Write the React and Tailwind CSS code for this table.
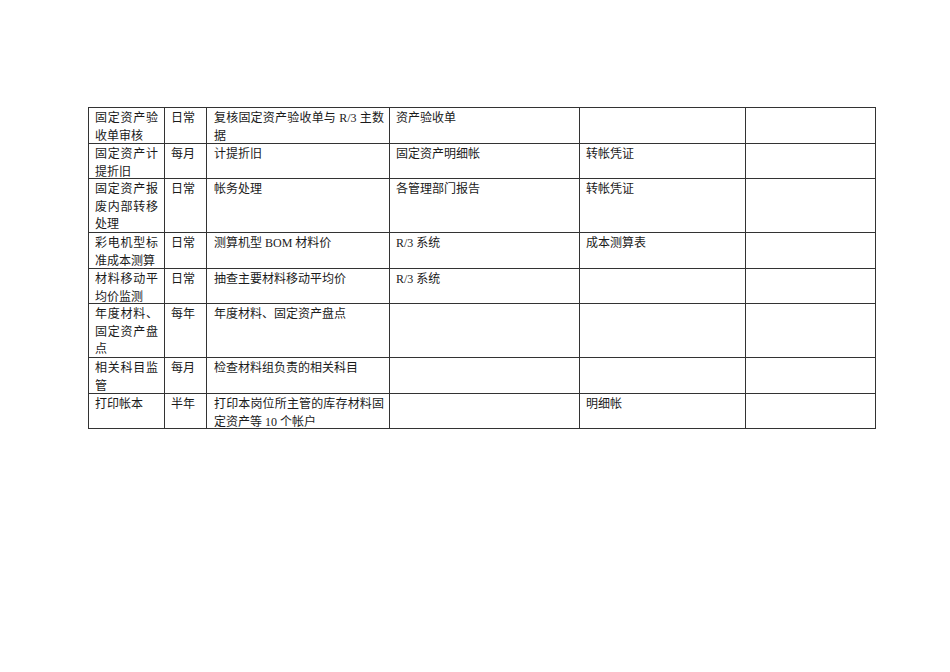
import React from "react";

// Row heights taken from the reference ruling
const rows = [
  { h: "h-[36px]", cells: ["固定资产验收单审核", "日常", "复核固定资产验收单与 R/3 主数据", "资产验收单", "", ""] },
  { h: "h-[35px]", cells: ["固定资产计提折旧", "每月", "计提折旧", "固定资产明细帐", "转帐凭证", ""] },
  { h: "h-[54px]", cells: ["固定资产报废内部转移处理", "日常", "帐务处理", "各管理部门报告", "转帐凭证", ""] },
  { h: "h-[36px]", cells: ["彩电机型标准成本测算", "日常", "测算机型 BOM 材料价", "R/3 系统", "成本测算表", ""] },
  { h: "h-[35px]", cells: ["材料移动平均价监测", "日常", "抽查主要材料移动平均价", "R/3 系统", "", ""] },
  { h: "h-[54px]", cells: ["年度材料、固定资产盘点", "每年", "年度材料、固定资产盘点", "", "", ""] },
  { h: "h-[36px]", cells: ["相关科目监管", "每月", "检查材料组负责的相关科目", "", "", ""] },
  { h: "h-[35px]", cells: ["打印帐本", "半年", "打印本岗位所主管的库存材料固定资产等 10 个帐户", "", "明细帐", ""] },
];

const cellPad = [
  "px-[6px] text-justify",
  "pl-[6px] pr-[4px]",
  "pl-[7px] pr-[5px] text-justify",
  "pl-[6px] pr-[5px]",
  "pl-[6px] pr-[5px]",
  "pl-[6px] pr-[5px]",
];

export default function App() {
  return (
    <div className="w-[950px] h-[672px] bg-white text-[#1a1a1a] pt-[107px] pl-[88px] font-['Liberation_Serif','Noto_Sans_CJK_SC',serif]">
      <div className="grid grid-cols-[76px_42px_183px_190px_166px_130px] w-max border-l border-t border-[#333] text-[12px] leading-[17.5px]">
        {rows.map((r, ri) =>
          r.cells.map((c, ci) => (
            <div key={ri + "-" + ci} className={r.h + " pt-[2px] border-r border-b border-[#333] overflow-hidden " + cellPad[ci]}>
              {c}
            </div>
          ))
        )}
      </div>
    </div>
  );
}
